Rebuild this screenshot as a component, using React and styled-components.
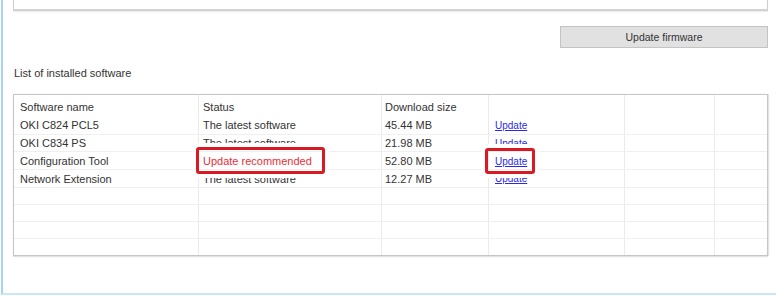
import React from "react";
import styled, { createGlobalStyle } from "styled-components";

const GlobalStyle = createGlobalStyle`
  html, body {
    margin: 0;
    padding: 0;
    background: #fff;
  }
  body {
    font-family: "Liberation Sans", Arial, sans-serif;
    font-size: 11px;
    color: #333;
  }
`;

const Frame = styled.div`
  width: 775px;
  height: 295px;
  margin-left: 1px;
  border-left: 2px solid #a9d4f1;
  border-bottom: 2px solid #cbe6f8;
  padding: 0 8px 0 10px;
  box-sizing: border-box;
`;

const TopList = styled.div`
  height: 9px;
  border: 1px solid #cfcfcf;
  border-top: none;
  border-bottom: 2px solid #d2d2d2;
  box-shadow: 0 1px 1px #ececec;
`;

const ButtonRow = styled.div`
  display: flex;
  justify-content: flex-end;
  margin-top: 15px;
`;

const Button = styled.button`
  width: 208px;
  height: 22px;
  background: #e1e1e1;
  border: 1px solid #c4c4c4;
  font-family: inherit;
  font-size: 10.5px;
  color: #333;
  padding: 0;
`;

const Caption = styled.div`
  margin-top: 18px;
  line-height: 14px;
  padding-left: 1px;
`;

const Table = styled.div`
  margin-top: 14px;
  display: grid;
  grid-template-columns: 184px 183px 107px 136px 90px 1fr;
  grid-template-rows: 21px 18px 17px 18px 18px 17px 17px 17px 17px;
  border: 1px solid #c6c6c6;
  box-shadow: 0 1px 1px #e2e2e2, 1px 0 1px #e2e2e2;
  background: #fff;
`;

const Cell = styled.div`
  position: relative;
  display: flex;
  align-items: center;
  padding-left: ${(p) => p.$pad || 4}px;
  padding-top: ${(p) => (p.$head ? 3 : 0)}px;
  border-left: ${(p) => (p.$first ? "none" : "1px solid #ebebeb")};
  border-top: ${(p) => (p.$line ? "1px solid #f0f0f0" : "none")};
  color: ${(p) => (p.$alert ? "#ec2e38" : "#333")};
  white-space: nowrap;
  box-sizing: border-box;
`;

const Link = styled.a`
  color: #2a2ae6;
  text-decoration: underline;
  font-size: 10px;
`;

const Mark = styled.div`
  position: absolute;
  left: ${(p) => p.$left}px;
  top: ${(p) => p.$top}px;
  width: ${(p) => p.$w}px;
  height: ${(p) => p.$h}px;
  border: 3px solid #da1a22;
  border-radius: 3px;
  box-sizing: border-box;
  box-shadow: 0 0 0 4px #fff;
  z-index: 2;
`;

const MarkedText = styled.span`
  position: relative;
  z-index: 3;
`;

const rows = [
  { name: "OKI C824 PCL5", status: "The latest software", size: "45.44 MB" },
  { name: "OKI C834 PS", status: "The latest software", size: "21.98 MB" },
  { name: "Configuration Tool", status: "Update recommended", size: "52.80 MB", marked: true },
  { name: "Network Extension", status: "The latest software", size: "12.27 MB" },
];

const pads = [6, 4, 3, 6, 4, 4];

export default function App() {
  const emptyRows = [0, 1, 2, 3];
  return (
    <>
      <GlobalStyle />
      <Frame>
        <TopList />
        <ButtonRow>
          <Button>Update firmware</Button>
        </ButtonRow>
        <Caption>List of installed software</Caption>
        <Table>
          <Cell $first $head $pad={pads[0]}>Software name</Cell>
          <Cell $head $pad={pads[1]}>Status</Cell>
          <Cell $head $pad={pads[2]}>Download size</Cell>
          <Cell $head />
          <Cell $head />
          <Cell $head />
          {rows.map((r, i) => (
            <React.Fragment key={r.name}>
              <Cell $first $line={i > 0} $pad={pads[0]}>{r.name}</Cell>
              <Cell $line={i > 0} $pad={pads[1]} $alert={r.marked}>
                {r.marked ? (
                  <>
                    <Mark $left={-3} $top={-5} $w={129} $h={27} />
                    <MarkedText>{r.status}</MarkedText>
                  </>
                ) : (
                  r.status
                )}
              </Cell>
              <Cell $line={i > 0} $pad={pads[2]}>{r.size}</Cell>
              <Cell $line={i > 0} $pad={pads[3]}>
                {r.marked ? (
                  <>
                    <Mark $left={-4} $top={-4} $w={50} $h={26} />
                    <MarkedText>
                      <Link href="#">Update</Link>
                    </MarkedText>
                  </>
                ) : (
                  <Link href="#">Update</Link>
                )}
              </Cell>
              <Cell $line={i > 0} />
              <Cell $line={i > 0} />
            </React.Fragment>
          ))}
          {emptyRows.map((k) => (
            <React.Fragment key={k}>
              <Cell $first $line />
              <Cell $line />
              <Cell $line />
              <Cell $line />
              <Cell $line />
              <Cell $line />
            </React.Fragment>
          ))}
        </Table>
      </Frame>
    </>
  );
}
